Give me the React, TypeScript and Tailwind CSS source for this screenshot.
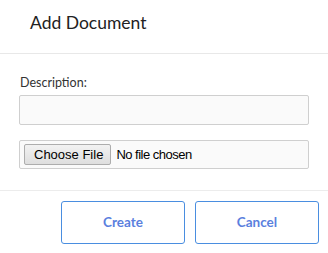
import React from 'react';

const App: React.FC = () => {
  return (
    <div className="w-[328px] h-[253px] bg-white overflow-hidden" style={{ fontFamily: 'Lato, sans-serif' }}>
      <div className="h-[54px] border-b border-[#e8e8e8] pl-[30px] pt-[11px]">
        <h1 className="text-[17.5px] leading-[24px] text-[#222]">Add Document</h1>
      </div>
      <div className="px-[19px] pt-[20px] pb-[21px] border-b border-[#ececec] w-[309px] box-content">
        <label className="block text-[12.5px] leading-[18px] text-[#333] pl-[1px] mb-[3px]">Description:</label>
        <input
          type="text"
          className="block w-[290px] h-[30px] bg-[#fafafa] border border-[#cfcfcf] rounded-[2px] outline-none"
        />
        <div className="mt-[15px] w-[290px] h-[29px] bg-[#fafafa] border border-[#cfcfcf] rounded-[2px] flex items-center pl-[4px]">
          <span
            className="h-[21px] pl-[9px] pr-[7px] flex items-center border border-[#adadad] rounded-[2px] bg-gradient-to-b from-[#f2f2f2] to-[#dedede] text-[13px] text-black"
            style={{ fontFamily: '"Liberation Sans", Arial, sans-serif' }}
          >
            Choose File
          </span>
          <span
            className="ml-[5px] text-[13px] tracking-[-0.5px] text-black"
            style={{ fontFamily: '"Liberation Sans", Arial, sans-serif' }}
          >
            No file chosen
          </span>
        </div>
      </div>
      <div className="flex justify-end gap-[10px] pr-[9px] pt-[10px]">
        <button className="w-[124px] h-[43px] border border-[#4a8ee0] rounded-[3px] text-[13.5px] font-bold text-[#5a80de]">Create</button>
        <button className="w-[124px] h-[43px] border border-[#4a8ee0] rounded-[3px] text-[13.5px] font-bold text-[#5a80de]">Cancel</button>
      </div>
    </div>
  );
};

export default App;
